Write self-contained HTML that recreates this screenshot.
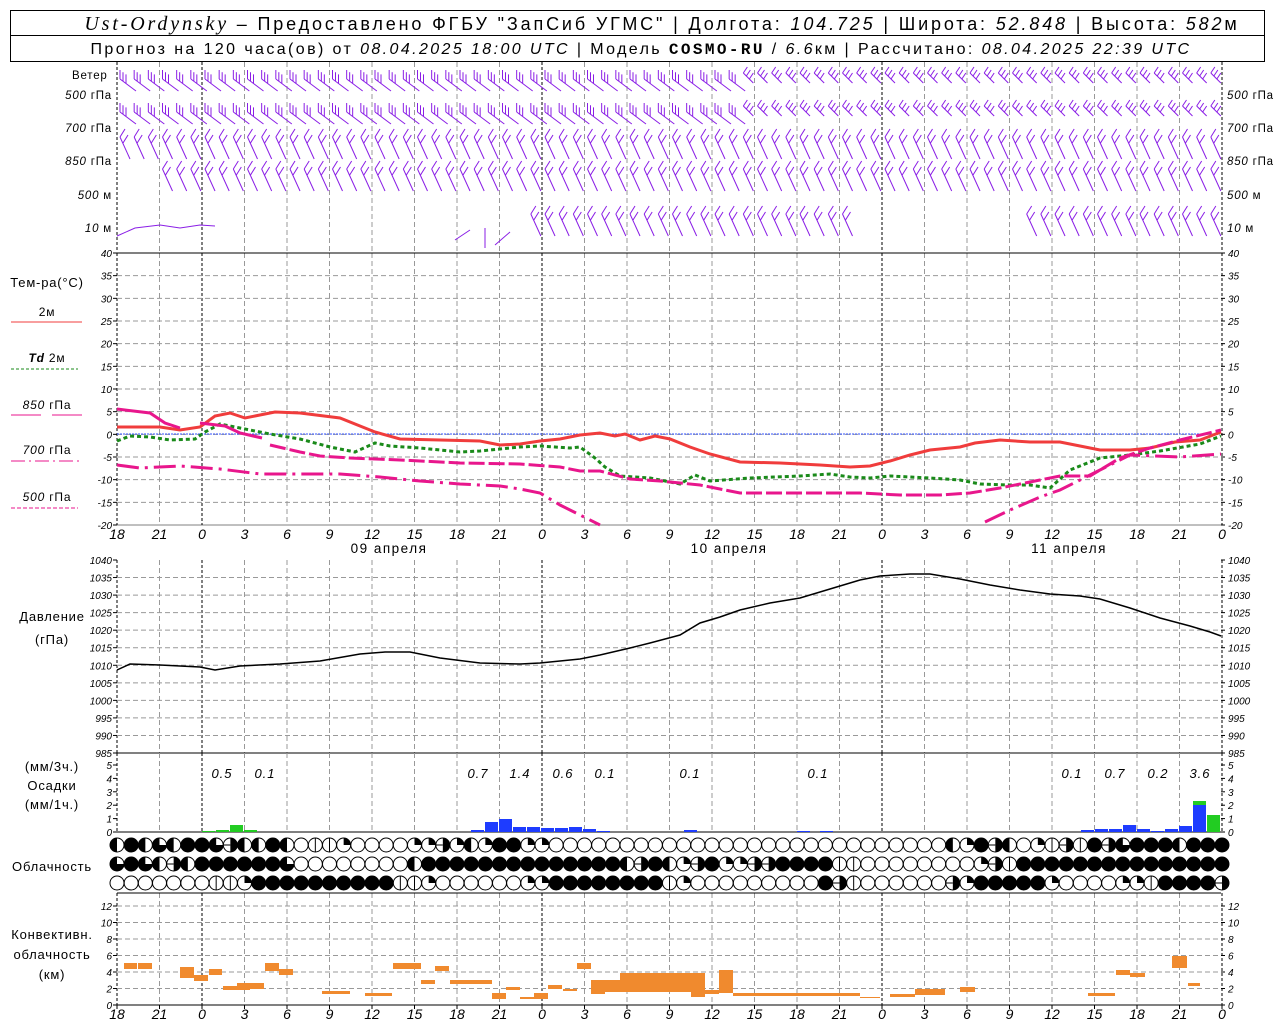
<!DOCTYPE html>
<html><head><meta charset="utf-8">
<style>
html,body{margin:0;padding:0;background:#fff;}
svg{display:block}
text{font-family:"Liberation Sans","DejaVu Sans",sans-serif;}
.it{font-style:italic}
</style></head>
<body>
<svg id="g" width="1280" height="1024" viewBox="0 0 1280 1024" xmlns="http://www.w3.org/2000/svg">
<rect width="1280" height="1024" fill="#fff"/>
<rect x="10.5" y="10.5" width="1254" height="25" fill="none" stroke="#000"/>
<rect x="10.5" y="35.5" width="1254" height="26" fill="none" stroke="#000"/>
<text x="662" y="30" font-size="18" text-anchor="middle" letter-spacing="2.85"><tspan font-family="Liberation Serif" font-style="italic" font-size="20">Ust-Ordynsky</tspan> – Предоставлено ФГБУ "ЗапСиб УГМС" | Долгота: <tspan class="it">104.725</tspan> | Широта: <tspan class="it">52.848</tspan> | Высота: <tspan class="it">582</tspan>м</text>
<text x="641" y="54" font-size="16" text-anchor="middle" letter-spacing="2.4">Прогноз на 120 часа(ов) от <tspan class="it">08.04.2025 18:00 UTC</tspan>  | Модель <tspan font-family="Liberation Mono" font-weight="bold">COSMO-RU</tspan> / <tspan class="it">6.6</tspan>км | Рассчитано: <tspan class="it">08.04.2025 22:39 UTC</tspan></text>

<g font-size="11.5" letter-spacing="0.8">
<text x="72" y="79">Ветер</text>
<text x="112" y="99" text-anchor="end"><tspan class="it">500</tspan> гПа</text>
<text x="112" y="132" text-anchor="end"><tspan class="it">700</tspan> гПа</text>
<text x="112" y="165" text-anchor="end"><tspan class="it">850</tspan> гПа</text>
<text x="112" y="199" text-anchor="end"><tspan class="it">500</tspan> м</text>
<text x="112" y="232" text-anchor="end"><tspan class="it">10</tspan>   м</text>
<text x="1227" y="99"><tspan class="it">500</tspan> гПа</text>
<text x="1227" y="132"><tspan class="it">700</tspan> гПа</text>
<text x="1227" y="165"><tspan class="it">850</tspan> гПа</text>
<text x="1227" y="199"><tspan class="it">500</tspan> м</text>
<text x="1227" y="232"><tspan class="it">10</tspan>   м</text>
</g>
<g font-size="13" text-anchor="middle" letter-spacing="0.8">
<text x="47" y="287">Тем-ра(°С)</text>
<text x="47" y="316" font-size="12">2м</text>
<text x="47" y="362" font-size="12"><tspan class="it" font-weight="bold">Td</tspan>  2м</text>
<text x="47" y="409" font-size="12"><tspan class="it">850</tspan> гПа</text>
<text x="47" y="454" font-size="12"><tspan class="it">700</tspan> гПа</text>
<text x="47" y="501" font-size="12"><tspan class="it">500</tspan> гПа</text>
<text x="52" y="621">Давление</text>
<text x="52" y="644">(гПа)</text>
<text x="52" y="771">(мм/3ч.)</text>
<text x="52" y="790">Осадки</text>
<text x="52" y="809">(мм/1ч.)</text>
<text x="52" y="871">Облачность</text>
<text x="52" y="939">Конвективн.</text>
<text x="52" y="959">облачность</text>
<text x="52" y="979">(км)</text>
</g>
<line x1="11" y1="322" x2="82" y2="322" stroke="#f03c3c" stroke-width="1"/>
<line x1="11" y1="369" x2="78" y2="369" stroke="#1a8a1a" stroke-dasharray="3,2"/>
<line x1="11" y1="415" x2="41" y2="415" stroke="#e8168c"/><line x1="52" y1="415" x2="82" y2="415" stroke="#e8168c"/>
<line x1="11" y1="461" x2="82" y2="461" stroke="#e8168c" stroke-dasharray="14,4,2,4"/>
<line x1="11" y1="508" x2="78" y2="508" stroke="#e8168c" stroke-dasharray="4,2"/>
<g font-size="13.5" text-anchor="middle" letter-spacing="1.5">
<text x="389" y="553">09 апреля</text>
<text x="729" y="553">10 апреля</text>
<text x="1069" y="553">11 апреля</text>
</g>
<g class="it" font-size="13" text-anchor="middle" letter-spacing="1">
<text x="222" y="778">0.5</text><text x="265" y="778">0.1</text>
<text x="478" y="778">0.7</text><text x="520" y="778">1.4</text>
<text x="563" y="778">0.6</text><text x="605" y="778">0.1</text>
<text x="690" y="778">0.1</text><text x="818" y="778">0.1</text>
<text x="1072" y="778">0.1</text><text x="1115" y="778">0.7</text>
<text x="1158" y="778">0.2</text><text x="1200" y="778">3.6</text>
</g>
<g id="dyn"></g>
</svg>
<script>
(function(){
var s='';
var X=function(h){return 117+h*340/24;};
function ln(x1,y1,x2,y2,c,w,d){s+='<line x1="'+x1+'" y1="'+y1+'" x2="'+x2+'" y2="'+y2+'" stroke="'+c+'" stroke-width="'+(w||1)+'"'+(d?' stroke-dasharray="'+d+'"':'')+'/>';}
function tx(x,y,t,sz,anc){s+='<text x="'+x+'" y="'+y+'" font-size="'+sz+'" font-style="italic" text-anchor="'+(anc||'start')+'">'+t+'</text>';}
function vgrid(y1,y2){for(var i=0;i<=26;i++){var x=X(3*i),h=(18+3*i)%24;var blk=(h==0||i==0||i==26);ln(x,y1,x,y2,blk?'#000':'#999',1,blk?'3,2':'5,3');}}
function hgrid(y1,y2,n,labels){var st=(y2-y1)/n;for(var k=0;k<=n;k++){var y=y1+k*st;if(k>0&&k<n)ln(117,y,1221,y,'#999',1,'5,3');ln(113,y,117,y,'#000');ln(1221,y,1225,y,'#000');if(labels){tx(112,y+4,labels[k],10,'end');tx(1228,y+4,labels[k],10);}}}
vgrid(62,252);
var tl=[];for(var v=40;v>=-20;v-=5)tl.push(v);
vgrid(253,525);hgrid(253,525,12,tl);
ln(117,253,1221,253,'#000');ln(117,525,1221,525,'#000',0.5);
ln(117,434,1221,434,'#3050ff',1,'2,1');
var pl=[];for(var v=1040;v>=985;v-=5)pl.push(v);
vgrid(560,753);hgrid(560,753,11,pl);
ln(117,753,1221,753,'#000');
vgrid(753,832);
for(var k=0;k<=5;k++){var y=832-k*13.4;ln(113,y,117,y,'#000');ln(1221,y,1225,y,'#000');tx(112,y+4,k,10,'end');tx(1228,y+4,k,10);}
ln(117,832,1221,832,'#000');
vgrid(893,1005);
ln(117,893,1221,893,'#000');
for(var k=0;k<=6;k++){var y=1005-k*16.5;if(k>0)ln(117,y,1221,y,'#999',1,'5,3');ln(113,y,117,y,'#000');ln(1221,y,1225,y,'#000');tx(112,y+4,k==0?0:2*k,10,'end');tx(1228,y+4,k==0?0:2*k,10);}
ln(117,1005,1221,1005,'#000');
for(var i=0;i<=26;i++){var x=X(3*i),h=(18+3*i)%24;tx(x,539,h,14,'middle');tx(x,1019,h,14,'middle');ln(x,1005,x,1009,'#000');}
var rows=[95,128,161,195,228];var off=[0,0,4,2,14];var col='#8a1ee6';
for(var r=0;r<5;r++){var y=rows[r]+off[r];
 for(var i=0;i<78;i++){var x=X(i)+3;
  if(r==4&&(i<29||(i>51&&i<64)))continue;
  if(r==3&&i<3)continue;
  if(r<2&&i<44){ln(x,y-16,x+16,y-4,col);for(var b=0;b<3;b++){ln(x+b*3,y-16+b*2.2,x+b*3,y-25+b*2.2,col);}}
  else if(r<2){ln(x,y-22,x+10,y-12,col);for(var b=0;b<3;b++){ln(x+b*3,y-22+b*3,x+b*3+4,y-28+b*3,col);}}
  else {ln(x,y-28,x+10,y-6,col);ln(x,y-28,x+5,y-36,col);ln(x+3,y-22,x+8,y-30,col);}
 }}
s+='<polyline points="117,236 135,228 160,225 180,228 200,225 215,226" fill="none" stroke="'+col+'"/>';
s+='<polyline points="455,240 470,230" fill="none" stroke="'+col+'"/><line x1="485" y1="228" x2="485" y2="248" stroke="'+col+'"/><polyline points="495,245 510,232" fill="none" stroke="'+col+'"/>';
function pl_(pts,c,w,d){s+='<polyline points="'+pts+'" fill="none" stroke="'+c+'" stroke-width="'+w+'"'+(d?' stroke-dasharray="'+d+'"':'')+'/>';}
pl_('117,427 160,427 180,430 200,427 215,416 230,413 245,418 275,412 300,413 340,418 360,426 375,432 400,439 440,440 480,441 500,445 520,444 540,441 560,439 580,435 600,433 615,436 625,434 640,440 655,436 670,439 690,447 710,454 740,462 780,463 820,465 850,467 870,466 890,461 910,455 930,450 960,447 975,443 1000,440 1030,442 1060,442 1080,446 1100,450 1130,450 1150,448 1175,442 1200,440 1221,432','#f03c3c',3);
pl_('117,441 130,436 150,437 170,440 195,439 205,432 220,424 240,428 270,434 300,439 330,447 355,452 375,443 390,446 420,448 460,452 480,451 520,447 540,446 570,448 580,447 595,458 605,467 620,476 650,478 680,484 695,475 710,481 750,478 800,476 830,474 850,477 870,478 890,476 930,478 960,480 980,484 1010,485 1030,485 1050,488 1070,470 1100,458 1130,455 1160,451 1200,444 1221,436','#1a8a1a',3,'4,3');
pl_('117,409 150,413 165,423 180,428','#e8168c',3);
pl_('200,423 225,426 240,433 262,438','#e8168c',3);
pl_('270,445 300,452 320,456 350,458 400,460 460,463 520,464 560,467 580,471 600,471 630,479 660,481 700,485 740,493 780,493 820,493 860,493 900,495 940,495 970,493 1000,488 1030,482 1060,476 1090,476 1120,458 1150,448 1180,440 1221,430','#e8168c',3,'16,4');
pl_('117,465 140,468 180,466 220,469 260,474 300,474 340,474 380,477 420,481 460,484 500,486 520,489 540,493 560,505 580,515 600,525','#e8168c',3,'22,6,3,6');
pl_('985,522 1010,510 1040,497 1060,490 1100,470 1130,455 1180,457 1221,454','#e8168c',3,'22,6,3,6');
pl_('117,670 130,664 160,665 200,667 215,670 240,666 280,664 320,661 360,654 385,652 410,652 440,658 480,663 520,664 540,663 580,659 600,655 630,648 650,643 680,635 700,623 720,617 740,610 770,603 800,598 830,589 860,580 880,576 910,574 930,574 960,579 990,585 1020,590 1050,594 1080,596 1100,599 1130,608 1160,618 1190,626 1210,632 1221,636','#000',1.5);
function bar(x,h,c){s+='<rect x="'+x+'" y="'+(832-h)+'" width="13" height="'+h+'" fill="'+c+'"/>';}
var G='#22cc22',B='#1e3cff';
bar(202,1,G);bar(216,2,G);bar(230,7,G);bar(244,2,G);
[[471,2],[485,10],[499,13],[513,5],[527,5],[541,4],[555,4],[569,5],[583,3],[597,1],[684,2],[797,1],[820,1],[1081,2],[1095,3],[1109,3],[1123,7],[1137,3],[1151,1],[1165,3],[1179,6]].forEach(function(a){bar(a[0],a[1],B);});
bar(1193,27,B);s+='<rect x="1193" y="801" width="13" height="4" fill="'+G+'"/>';bar(1207,17,G);
var R=['hFhthFFtehhFhOvvqOOOOqqeqhqFFqqOOOOOOOO'+'OOOOOOOOOOOOOOOOOOOOhqFehOqvevFetFFFhFFF',
       'tFthehFFFFFFtOOOOOOOOhFFFFFFFFFFFFFFheF'+'hqeFqqeeFFFFvvOOOOOOOOqevFFFFFFFFFFFFFFF',
       'OOOOOOOvvqFFFFFFFFFFvvqOOOOOOqqFFFFFFFF'+'vqOOOOOOOOOFevOOOOOOeqFFFFFqOOOOqqvFFFFe'];
var ys=[845,864,883];
for(var r=0;r<3;r++){for(var i=0;i<79;i++){var c=R[r][i]||'O',cx=X(i),cy=ys[r],rr=7;
 s+='<circle cx="'+cx+'" cy="'+cy+'" r="'+rr+'" fill="'+(c=='F'?'#000':'#fff')+'" stroke="#000"/>';
 if(c=='h')s+='<path d="M'+cx+','+(cy-rr)+' A'+rr+','+rr+' 0 0,0 '+cx+','+(cy+rr)+' Z" fill="#000"/>';
 if(c=='v')ln(cx,cy-rr,cx,cy+rr,'#000');
 if(c=='e'){s+='<path d="M'+cx+','+(cy-rr)+' A'+rr+','+rr+' 0 0,1 '+cx+','+(cy+rr)+' Z" fill="#000"/>';ln(cx-rr,cy,cx,cy,'#000');}
 if(c=='q')s+='<path d="M'+cx+','+cy+' L'+cx+','+(cy-rr)+' A'+rr+','+rr+' 0 0,1 '+(cx+rr)+','+cy+' Z" fill="#000"/>';
 if(c=='t')s+='<path d="M'+cx+','+cy+' L'+(cx+rr)+','+cy+' A'+rr+','+rr+' 0 1,1 '+cx+','+(cy-rr)+' Z" fill="#000"/>';
}}
[[124,137,963,969],[138,152,963,969],[180,194,967,978],[194,208,975,981],[209,222,969,975],[223,250,986,990],[237,264,983,989],[265,279,963,971],[279,293,969,975],[322,350,991,994],[365,392,993,996],[393,421,963,969],[421,435,980,984],[435,449,966,971],[450,492,980,984],[492,506,993,999],[506,520,987,990],[520,534,997,999],[534,548,993,999],[548,562,985,989],[563,577,989,991],[577,591,963,969],[591,605,980,994],[605,620,980,992],[620,705,973,992],[691,705,977,997],[705,719,990,994],[719,733,970,993],[733,860,993,996],[860,880,997,998],[890,915,994,997],[915,945,989,995],[960,975,987,992],[1088,1115,993,996],[1116,1130,970,975],[1130,1145,973,977],[1172,1187,956,968],[1188,1200,983,986]].forEach(function(a){s+='<rect x="'+a[0]+'" y="'+a[2]+'" width="'+(a[1]-a[0])+'" height="'+(a[3]-a[2])+'" fill="#f08a2e"/>';});
document.getElementById('dyn').innerHTML=s;
})();
</script>
</body></html>
